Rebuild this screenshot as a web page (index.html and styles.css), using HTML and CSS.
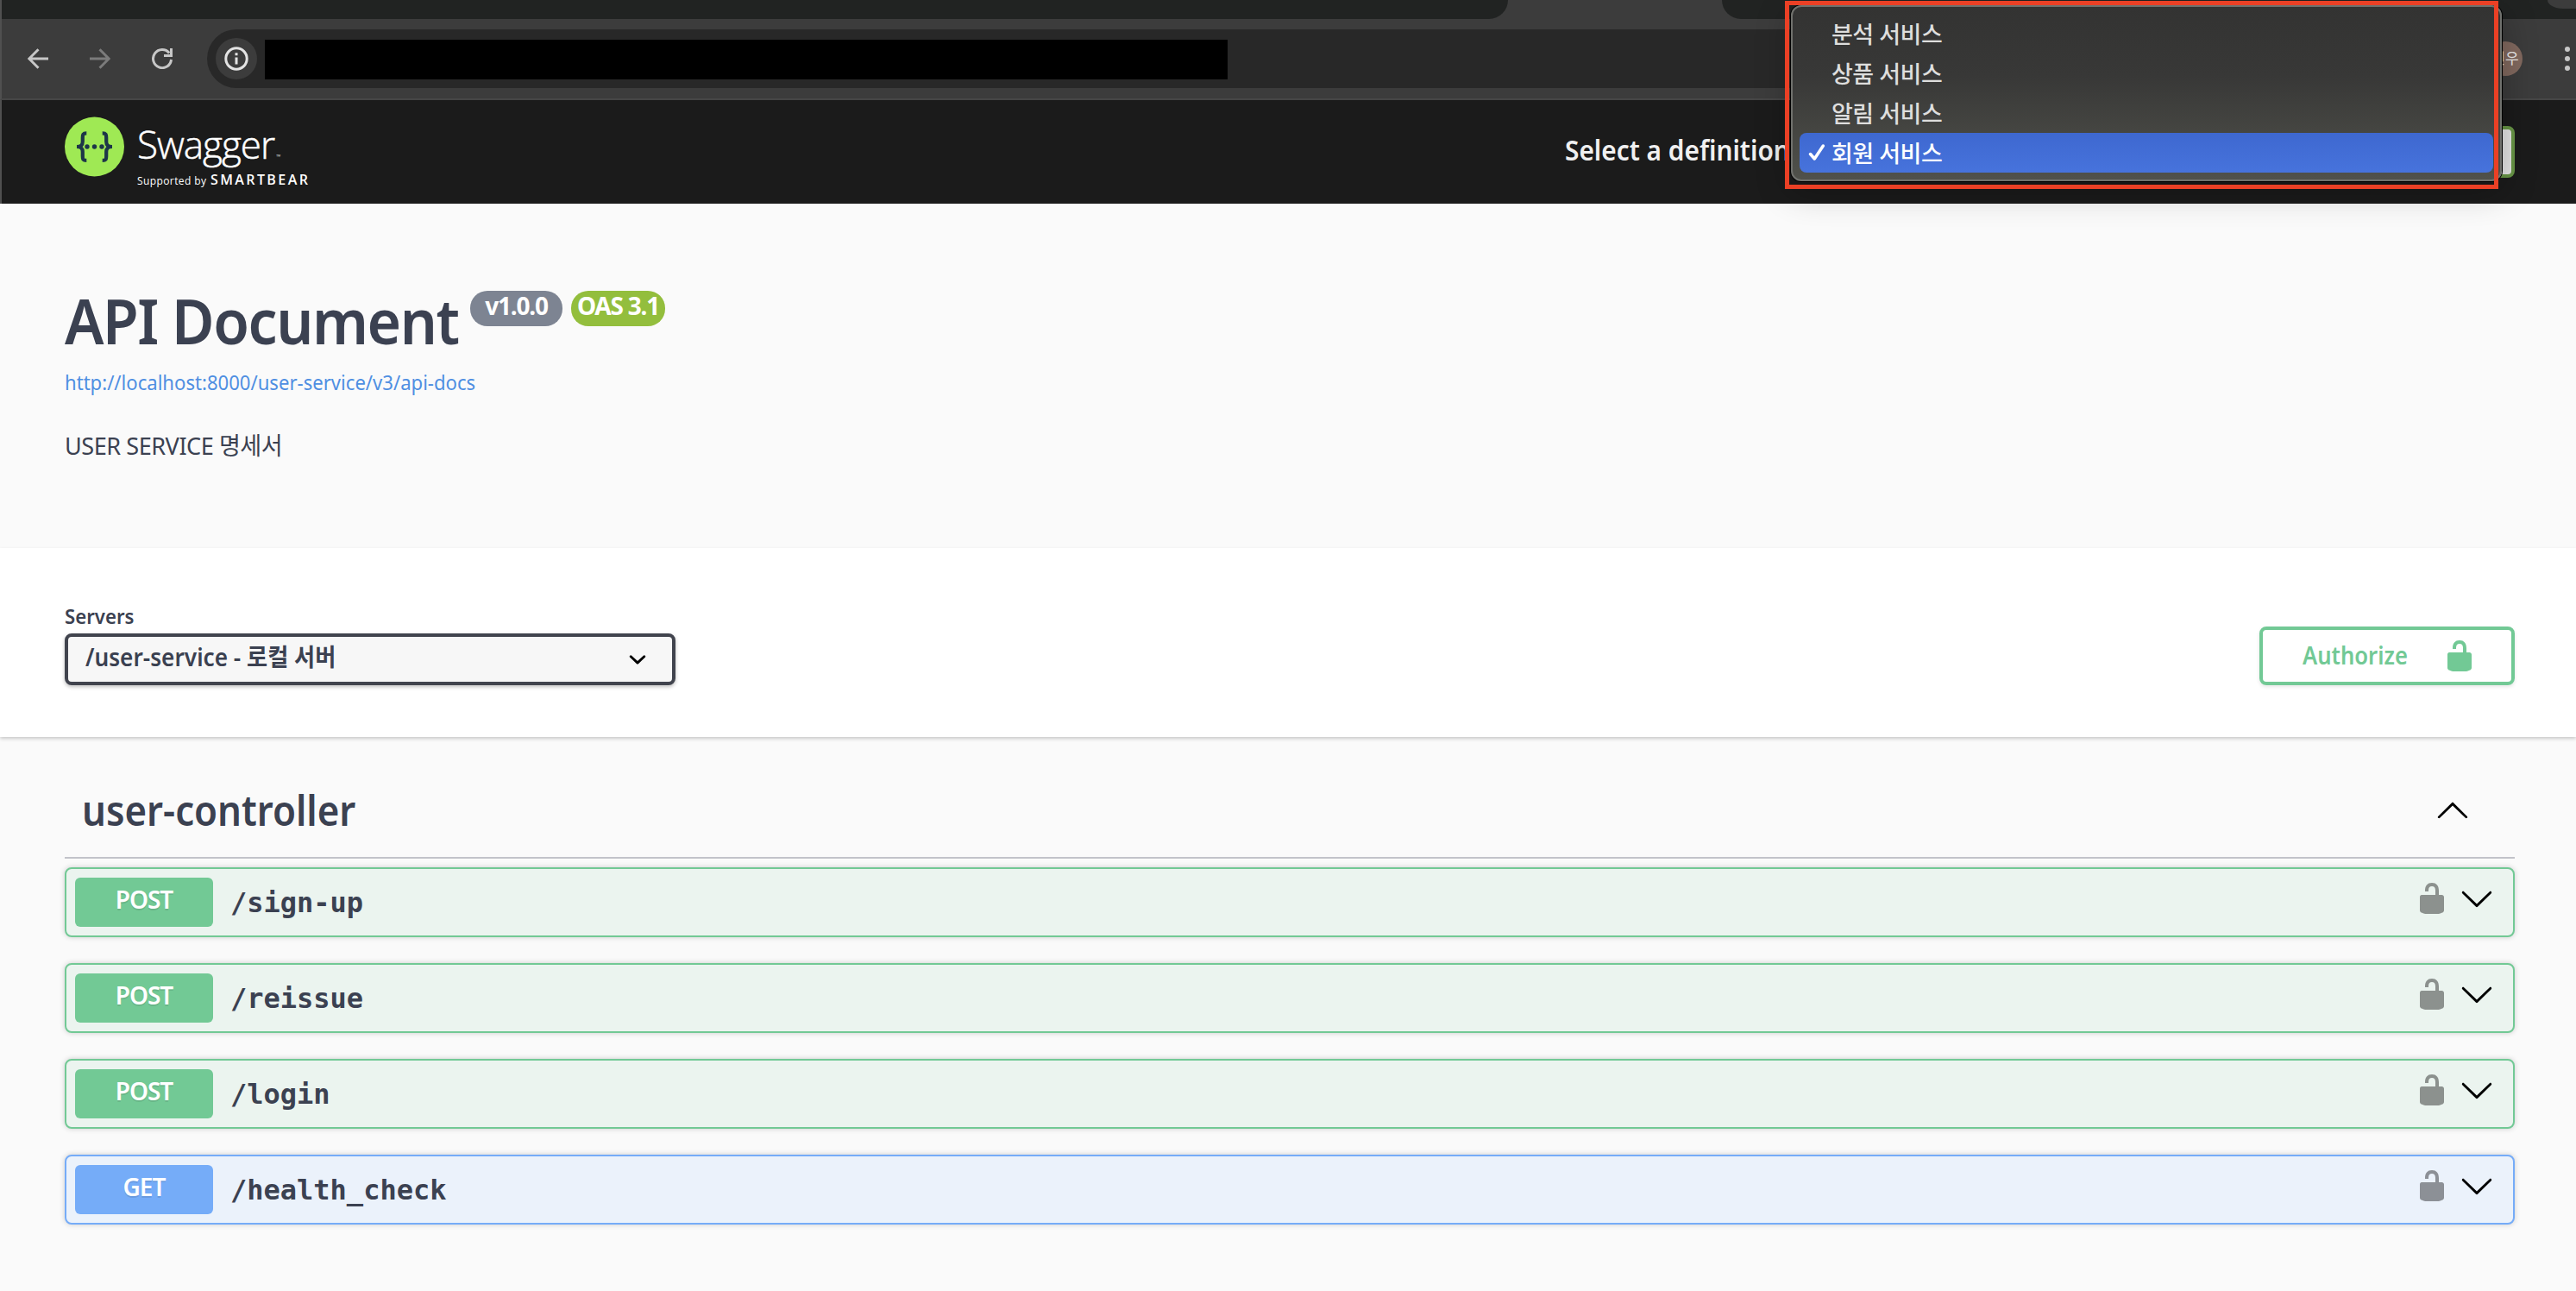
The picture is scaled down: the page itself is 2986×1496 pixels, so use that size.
FILE: index.html
```html
<!DOCTYPE html>
<html lang="ko">
<head>
    <meta charset="UTF-8" />
    <meta name="viewport" content="width=device-width, initial-scale=1.0" />
    <title>Swagger UI</title>
    <link rel="stylesheet" href="styles.css">
</head>
<body>
    <!-- shared icons -->
    <svg class="sprite" xmlns="http://www.w3.org/2000/svg">
        <symbol id="unlocked" viewBox="0 0 20 20">
            <path d="M15.8 8H14V5.6C14 2.703 12.665 1 10 1 7.334 1 6 2.703 6 5.6V6h2v-.801C8 3.754 8.797 3 10 3c1.203 0 2 .754 2 2.199V8H4c-.553 0-1 .646-1 1.199V17c0 .549.428 1.139.951 1.307l1.197.387C5.672 18.861 6.55 19 7.1 19h5.8c.549 0 1.428-.139 1.951-.307l1.196-.387c.524-.167.953-.757.953-1.306V9.199C17 8.646 16.352 8 15.8 8z"></path>
        </symbol>
        <symbol id="arrow-down" viewBox="0 0 20 20">
            <path d="M17.418 6.109c.272-.268.709-.268.979 0s.271.701 0 .969l-7.908 7.830c-.27.268-.707.268-.979 0l-7.908-7.830c-.27-.268-.27-.701 0-.969.271-.268.709-.268.979 0L10 13.250l7.418-7.141z"></path>
        </symbol>
        <symbol id="arrow-up" viewBox="0 0 20 20">
            <path d="M17.418 14.908c.272.268.709.268.979 0s.271-.701 0-.969l-7.908-7.830c-.27-.268-.707-.268-.979 0l-7.908 7.830c-.27.268-.27.701 0 .969.271.268.709.268.979 0L10 7.767l7.418 7.141z"></path>
        </symbol>
    </svg>

    <div class="browser">
        <div class="tabstrip">
            <div class="tabs-left"></div>
            <div class="tabs-right"><div class="tab-search"></div></div>
        </div>
        <div class="toolbar">
            <div class="nav">
                <svg width="24" height="24" viewBox="0 0 24 24"><path d="M24 12H2M12.500 1.300L1.800 12l10.700 10.700"></path></svg>
                <svg class="disabled" width="24" height="24" viewBox="0 0 24 24"><path d="M0 12h22M11.500 1.300L22.200 12 11.500 22.700"></path></svg>
                <svg width="24" height="24" viewBox="0 0 24 24"><path d="M22.500 13A10.500 10.500 0 1 1 20.200 5.500"></path><path d="M22.500 0v8.500H14"></path></svg>
            </div>
            <div class="omnibox">
                <div class="site-info">
                    <svg width="28" height="28" viewBox="0 0 28 28"><circle cx="14" cy="14" r="12.200"></circle><path d="M14 12.500v8M14 7.300v3"></path></svg>
                </div>
                <div class="url"></div>
            </div>
            <div class="avatar">진우</div>
            <div class="menu-dots"><i></i><i></i><i></i></div>
        </div>
    </div>

    <div class="topbar">
        <div class="logo">
            <svg width="70" height="70" viewBox="0 0 70 70">
                <circle cx="34.500" cy="35" r="34.500" fill="#9fe954"></circle>
                <g fill="none" stroke="#1d3648" stroke-width="4.200">
                    <path d="M25.300 19.300C21 19.300 20.800 21.200 20.800 24.500V29C20.800 33 19 35 14 35 19 35 20.800 37 20.800 41V46C20.800 49.500 21 50.900 25.300 50.900"></path>
                    <path d="M43.700 19.300C48 19.300 48.200 21.200 48.200 24.500V29C48.200 33 50 35 55 35 50 35 48.200 37 48.200 41V46C48.200 49.500 48 50.900 43.700 50.900"></path>
                </g>
                <g fill="#1d3648"><circle cx="26" cy="35" r="2.700"></circle><circle cx="34.500" cy="35" r="2.700"></circle><circle cx="43" cy="35" r="2.700"></circle></g>
            </svg>
            <div class="wordmark">
                <div class="name">Swagger<small>™</small></div>
                <div class="by"><span>Supported by</span><b>SMARTBEAR</b></div>
            </div>
        </div>
        <div class="definition">
            <span>Select a definition</span>
            <div class="definition-select"></div>
        </div>
    </div>

    <div class="popup">
        <div class="option">분석 서비스</div>
        <div class="option">상품 서비스</div>
        <div class="option">알림 서비스</div>
        <div class="option selected">
            <svg width="20" height="20" viewBox="0 0 20 20"><path d="M2.500 11.500L7.300 17 17.300 2"></path></svg>
            회원 서비스
        </div>
    </div>
    <div class="highlight"></div>

    <div class="info">
        <div class="title">
            <h1>API Document</h1>
            <span class="version">v1.0.0</span>
            <span class="version oas">OAS 3.1</span>
        </div>
        <a class="link">http://localhost:8000/user-service/v3/api-docs</a>
        <p class="description">USER SERVICE 명세서</p>
    </div>

    <div class="schemes">
        <div class="servers">
            <label>Servers</label>
            <div class="server-select">
                <span>/user-service - 로컬 서버</span>
                <svg width="40" height="40" viewBox="0 0 20 20"><path d="M13.418 7.859a.695.695 0 0 1 .978 0 .68.68 0 0 1 0 .969l-3.908 3.830a.697.697 0 0 1-.979 0l-3.908-3.830a.68.68 0 0 1 0-.969.695.695 0 0 1 .978 0L10 11l3.418-3.141z"></path></svg>
            </div>
        </div>
        <div class="authorize">
            <span>Authorize</span>
            <svg width="40" height="40"><use href="#unlocked"></use></svg>
        </div>
    </div>

    <div class="operations">
        <div class="tag">
            <h3>user-controller</h3>
            <svg width="40" height="40"><use href="#arrow-up"></use></svg>
        </div>
        <div class="opblock post">
            <span class="method">POST</span>
            <span class="path">/sign-up</span>
            <div class="controls">
                <svg class="lock" width="40" height="40"><use href="#unlocked"></use></svg>
                <svg width="40" height="40"><use href="#arrow-down"></use></svg>
            </div>
        </div>
        <div class="opblock post">
            <span class="method">POST</span>
            <span class="path">/reissue</span>
            <div class="controls">
                <svg class="lock" width="40" height="40"><use href="#unlocked"></use></svg>
                <svg width="40" height="40"><use href="#arrow-down"></use></svg>
            </div>
        </div>
        <div class="opblock post">
            <span class="method">POST</span>
            <span class="path">/login</span>
            <div class="controls">
                <svg class="lock" width="40" height="40"><use href="#unlocked"></use></svg>
                <svg width="40" height="40"><use href="#arrow-down"></use></svg>
            </div>
        </div>
        <div class="opblock get">
            <span class="method">GET</span>
            <span class="path">/health_check</span>
            <div class="controls">
                <svg class="lock" width="40" height="40"><use href="#unlocked"></use></svg>
                <svg width="40" height="40"><use href="#arrow-down"></use></svg>
            </div>
        </div>
    </div>
</body>
</html>
```
FILE: styles.css
```css
:root {
  --text: #3b4151;
  --post: #72c995;
  --get: #75acf8;
  --toolbar: #3c3c3c;
  --strip: #212322;
}

* {
  box-sizing: border-box;
}

body {
  margin: 0;
  height: 1496px;
  overflow: hidden;
  position: relative;
  background: #fafafa;
  color: var(--text);
  font-family: "Noto Sans", "Noto Sans CJK KR", sans-serif;
}

h1, h3, p {
  margin: 0;
}

svg {
  display: block;
  flex: none;
}

.sprite {
  display: none;
}

/* Browser chrome */
.browser {
  height: 116px;
  background: var(--toolbar);
  border-bottom: 2px solid #464646;
  border-left: 2px solid #505050;
}

.tabstrip {
  height: 22px;
  display: flex;
  justify-content: space-between;
}

.tabs-left {
  width: 1746px;
  background: var(--strip);
  border-bottom-right-radius: 22px;
}

.tabs-right {
  width: 990px;
  background: var(--strip);
  border-bottom-left-radius: 22px;
  display: flex;
  justify-content: flex-end;
}

.tab-search {
  width: 33px;
  height: 10px;
  background: var(--toolbar);
  border-bottom-left-radius: 18px 10px;
}

.toolbar {
  height: 92px;
  display: flex;
  align-items: center;
  padding: 0 7px 0 30px;
}

.nav {
  display: flex;
  gap: 48px;
  margin-right: 40px;
}

.nav svg {
  fill: none;
  stroke: #c7c7c7;
  stroke-width: 3;
}

.nav .disabled {
  stroke: #7b7b7b;
}

.omnibox {
  flex: 1;
  height: 68px;
  margin-right: 60px;
  border-radius: 34px;
  background: #282828;
  display: flex;
  align-items: center;
  padding-left: 10px;
}

.site-info {
  width: 48px;
  height: 48px;
  border-radius: 50%;
  background: var(--toolbar);
  display: flex;
  align-items: center;
  justify-content: center;
}

.site-info svg {
  fill: none;
  stroke: #e3e3e3;
  stroke-width: 3;
}

.url {
  width: 1116px;
  height: 46px;
  margin: 2px 0 0 9px;
  background: #000;
}

.avatar {
  width: 40px;
  height: 40px;
  margin-right: 49px;
  border-radius: 50%;
  background: #82695f;
  color: #eee;
  font-size: 17px;
  line-height: 40px;
  text-align: center;
}

.menu-dots {
  display: flex;
  flex-direction: column;
  gap: 5px;
}

.menu-dots i {
  width: 6px;
  height: 6px;
  border-radius: 50%;
  background: #c7c7c7;
}

/* Swagger topbar */
.topbar {
  height: 120px;
  background: #1b1b1b;
  border-left: 2px solid #505050;
  padding: 0 71px 0 73px;
  display: flex;
  justify-content: space-between;
}

.logo {
  display: flex;
  padding-top: 19px;
  color: #fff;
  font-family: "Open Sans", sans-serif;
}

.wordmark {
  margin-left: 14px;
}

.name {
  margin-top: 7px;
  font-weight: 300;
  -webkit-text-stroke: 0.5px #fff;
  font-size: 44px;
  line-height: 50px;
  letter-spacing: -1px;
}

.name small {
  font-size: 7px;
  letter-spacing: 0;
  margin-left: 2px;
  -webkit-text-stroke: 0;
}

.by {
  display: flex;
  align-items: baseline;
  margin-top: -9px;
  line-height: 20px;
}

.by span {
  width: 85px;
  font-size: 12px;
  letter-spacing: 0.4px;
}

.by b {
  font-size: 16px;
  font-weight: 600;
  letter-spacing: 2.4px;
}

.definition {
  display: flex;
  align-items: center;
  width: 1101px;
  color: #f0f0f0;
}

.definition span {
  width: 281px;
  flex: none;
  font-size: 32px;
  font-weight: 600;
  line-height: 40px;
  white-space: nowrap;
  padding-bottom: 4px;
  transform: scaleX(0.932);
  transform-origin: left;
}

.definition-select {
  flex: 1;
  height: 60px;
  border: 4px solid #699747;
  border-radius: 8px;
  background: #e8e8e8;
}

/* Native select menu */
.popup {
  position: absolute;
  left: 2076px;
  top: 6px;
  width: 824px;
  height: 204px;
  padding: 8px 8px;
  border: 2px solid #70716d;
  border-radius: 12px;
  background: linear-gradient(#333332, #383837 40%, #50514b);
  box-shadow: 0 0 0 1px #000, 0 10px 40px rgba(0, 0, 0, 0.3);
  color: #dededd;
}

.option {
  height: 46px;
  padding-left: 37px;
  font-size: 27px;
  font-weight: 500;
  line-height: 47px;
  letter-spacing: -0.5px;
  position: relative;
}

.option.selected {
  background: linear-gradient(#3e68d0, #4773dc);
  border-radius: 8px;
  color: #fff;
}

.option svg {
  position: absolute;
  left: 10px;
  top: 13px;
  fill: none;
  stroke: #fff;
  stroke-width: 3.500;
  stroke-linecap: round;
  stroke-linejoin: round;
}

.highlight {
  position: absolute;
  left: 2069px;
  top: 1px;
  width: 827px;
  height: 218px;
  border: 5px solid #eb4025;
}

/* Info */
.info {
  height: 399px;
  padding: 104px 71px 0 75px;
}

.title {
  display: flex;
  align-items: flex-start;
}

.title h1 {
  width: 470px;
  font-size: 72px;
  font-weight: 600;
  line-height: 62px;
  letter-spacing: -1.5px;
  white-space: nowrap;
  transform: scaleX(0.94);
  transform-origin: left;
}

.version {
  width: 107px;
  height: 41px;
  margin: -3px 10px 0 0;
  border-radius: 20px;
  background: #7d8492;
  color: #fff;
  font-size: 28px;
  font-weight: 700;
  line-height: 35px;
  text-align: center;
  letter-spacing: -1.2px;
}

.version.oas {
  width: 109px;
  background: #93be3d;
}

.link {
  display: block;
  margin-top: 26px;
  font-size: 24px;
  line-height: 30px;
  color: #4f8fe2;
  transform: scaleX(0.921);
  transform-origin: left;
}

.description {
  margin-top: 40px;
  font-size: 28px;
  line-height: 36px;
  letter-spacing: -0.5px;
  transform: scaleX(0.968);
  transform-origin: left;
}

/* Servers and authorize */
.schemes {
  height: 219px;
  padding: 64px 71px 0 75px;
  background: #fff;
  box-shadow: 0 2px 4px rgba(0, 0, 0, 0.2);
  display: flex;
  justify-content: space-between;
  align-items: flex-start;
  position: relative;
  z-index: -1;
}

.servers label {
  display: block;
  font-size: 24px;
  font-weight: 600;
  line-height: 30px;
  margin-bottom: 5px;
  transform: scaleX(0.925);
  transform-origin: left;
}

.server-select {
  width: 708px;
  height: 60px;
  padding: 0 20px;
  border: 4px solid #41444e;
  border-radius: 8px;
  background: #f7f7f7;
  box-shadow: 0 2px 4px rgba(0, 0, 0, 0.25);
  display: flex;
  align-items: center;
  justify-content: space-between;
}

.server-select span {
  padding-bottom: 7px;
  font-size: 28px;
  font-weight: 600;
  line-height: 36px;
  transform: scaleX(0.936);
  transform-origin: left;
}

.authorize {
  width: 296px;
  height: 68px;
  margin-top: 27px;
  padding: 0 40px 0 46px;
  border: 4px solid var(--post);
  border-radius: 8px;
  box-shadow: 0 2px 4px rgba(0, 0, 0, 0.1);
  color: var(--post);
  fill: var(--post);
  display: flex;
  align-items: center;
  justify-content: space-between;
}

.authorize span {
  padding-bottom: 3px;
  font-size: 28px;
  font-weight: 600;
  line-height: 36px;
  transform: scaleX(0.915);
  transform-origin: left;
}

/* Operations */
.operations {
  padding: 0 71px 0 75px;
}

.tag {
  height: 141px;
  margin-bottom: 10px;
  padding: 54px 52px 0 20px;
  border-bottom: 2px solid #c2c3c9;
  display: flex;
  justify-content: space-between;
}

.tag h3 {
  font-size: 48px;
  font-weight: 600;
  line-height: 62px;
  transform: scaleX(0.912);
  transform-origin: left;
}

.tag svg {
  margin-top: 10px;
}

.opblock {
  height: 81px;
  margin-bottom: 30px;
  padding: 0 22px 0 10px;
  border: 2px solid;
  border-radius: 8px;
  box-shadow: 0 0 6px rgba(0, 0, 0, 0.19);
  display: flex;
  align-items: center;
}

.opblock.post {
  border-color: var(--post);
  background: #ebf4ef;
}

.opblock.get {
  border-color: var(--get);
  background: #ebf2fb;
}

.method {
  width: 160px;
  height: 57px;
  border-radius: 6px;
  color: #fff;
  font-size: 28px;
  font-weight: 600;
  line-height: 51px;
  letter-spacing: -1px;
  text-align: center;
  text-shadow: 0 2px 0 rgba(0, 0, 0, 0.1);
}

.post .method {
  background: var(--post);
}

.get .method {
  background: var(--get);
}

.path {
  margin-left: 20px;
  font-family: "DejaVu Sans Mono", monospace;
  font-size: 32px;
  font-weight: 700;
  line-height: 40px;
}

.controls {
  display: flex;
  gap: 12px;
  margin-left: auto;
  padding-bottom: 9px;
}

.lock {
  opacity: 0.4;
}
```
